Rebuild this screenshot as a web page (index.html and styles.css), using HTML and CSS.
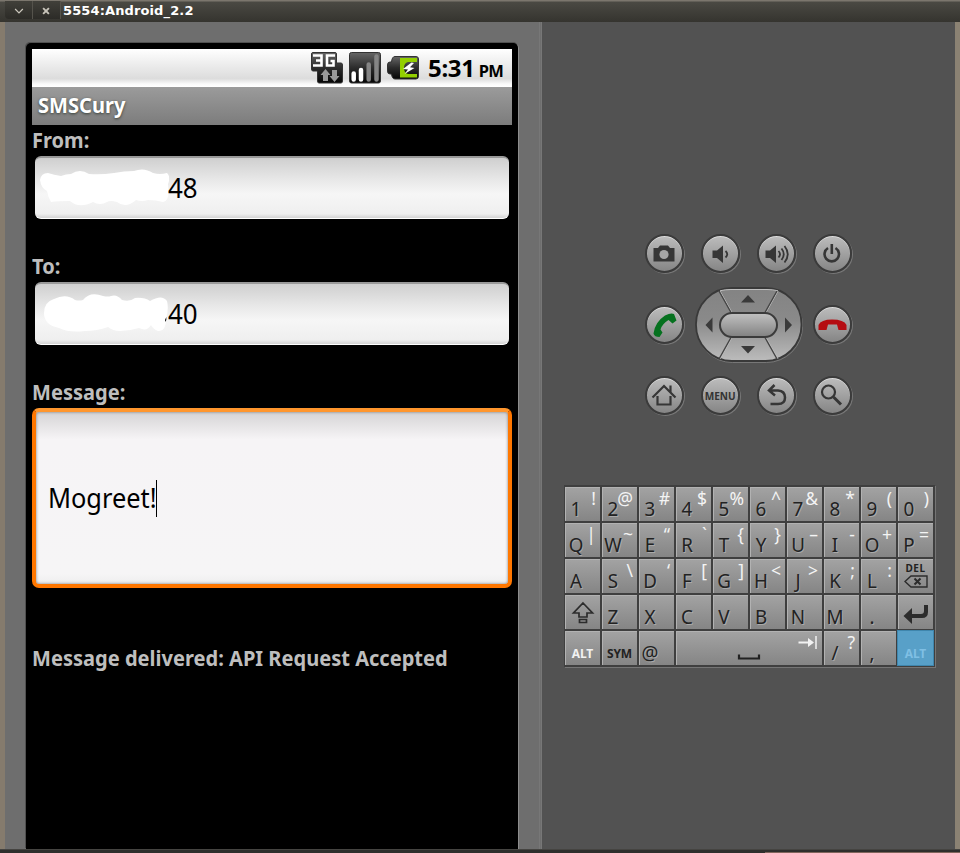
FILE: index.html
```html
<!DOCTYPE html>
<html lang="en">
<head>
<meta charset="utf-8">
<title>5554:Android_2.2</title>
<link rel="stylesheet" href="styles.css">
</head>
<body>
<div class="window">
  <header class="titlebar">
    <svg class="winbtn first" viewBox="0 0 28 18"><path d="M10.500 8 L14.500 12 L18.500 8" fill="none" stroke="#c8c4ba" stroke-width="1.300"/></svg>
    <svg class="winbtn" viewBox="0 0 28 18"><path d="M10.500 7 L16.500 13 M16.500 7 L10.500 13" fill="none" stroke="#c8c4ba" stroke-width="2"/></svg>
    <span class="title">5554:Android_2.2</span>
  </header>
  <div class="body">
    <section class="device">
      <div class="phone">
        <div class="statusbar">
          <svg class="st" width="110" height="36" viewBox="310 50 110 36">
            <defs>
              <linearGradient id="dk" x2="0" y2="1"><stop offset="0" stop-color="#666"/><stop offset=".5" stop-color="#2c2c2c"/><stop offset="1" stop-color="#050505"/></linearGradient>
            </defs>
            <path d="M313 52.500H335Q336.500 52.500 336.500 54V63H341Q342.500 63 342.500 65V81Q342.500 83 341 83H319Q317.500 83 317.500 81V71H313Q311.500 71 311.500 69V54Q311.500 52.500 313 52.500Z" fill="url(#dk)" stroke="#333"/>
            <path d="M313 55.500H321.500V65.500H313 M316 60.500H321.500 M335 55.500H327V65.500H333.500V61H330.500" fill="none" stroke="#fff" stroke-width="2.600"/>
            <path d="M325.500 69L330.500 75H328V81H323V75H320.500Z M334.500 82L339.500 76H337V70H332V76H329.500Z" fill="#999"/>
            <rect x="349.500" y="52.500" width="31" height="30.500" rx="2" fill="url(#dk)" stroke="#333"/>
            <g stroke-width="4.500" stroke-linecap="round"><path d="M353.700 73.500V79.500M361 70V79.500" stroke="#fff"/><path d="M368.700 64.500V79.500M376.500 56.500V79.500" stroke="#858585"/></g>
            <path d="M395 56.500H416Q418.500 56.500 418.500 59V76Q418.500 79 416 79H395Q392 79 391.500 74H390Q387.500 74 387.500 71V65Q387.500 62 390 62H391.500Q392 56.500 395 56.500Z" fill="url(#dk)" stroke="#333"/>
            <path d="M400 58H417V62H408Q404 63 404 68Q404 73 408 74H417V77.500H400Z" fill="#93cf00"/>
            <path d="M411.500 62.500L403 69L408 69.500L404.500 74L414.500 68L410 67.200L414 63Z" fill="#fff"/>
          </svg>
          <span class="clock">5:31 <small>PM</small></span>
        </div>
        <div class="appbar"><span>SMSCury</span></div>
        <div class="label from">From:</div>
        <div class="field">
          <svg class="blot" width="130" height="44" viewBox="39 166 130 44"><path d="M40 180Q41 173 48 173Q54 175 61 176Q66 174 71 174Q80 168 89 174Q101 175 114 173Q124 171 134 171Q144 167 153 173Q160 175 167 173Q171 177 168 184Q170 202 163 202Q156 200 148 200Q142 202 136 200Q126 209 117 202Q110 200 107 202Q100 206 93 202Q79 209 70 201Q58 201 51 202Q48 197 47 191Q41 188 40 180Z" fill="#fff"/></svg>
          <span class="digits">48</span>
        </div>
        <div class="label to">To:</div>
        <div class="field">
          <svg class="blot" width="130" height="44" viewBox="39 292 130 44"><path d="M44 313Q44 302 54 299Q66 293 75 300Q79 301 83 300Q90 291 103 296Q108 297 111 296Q117 294 122 300Q130 302 135 298Q144 297 150 301Q162 294 167 301Q169 309 166 319Q166 332 158 331Q153 329 151 325Q147 332 139 328Q129 331 120 331Q113 331 108 327Q97 331 85 331Q69 333 59 328Q44 325 44 313Z" fill="#fff"/><path d="M165 320L166.300 317V320L165 322Z" fill="#111"/></svg>
          <span class="digits">40</span>
        </div>
        <div class="label msg">Message:</div>
        <div class="field focused"><span class="mogreet">Mogreet!</span><i class="caret"></i></div>
        <div class="label result">Message delivered: API Request Accepted</div>
      </div>
    </section>
    <section class="controls">
      <div class="pad">
        <div class="btn"><svg viewBox="0 0 38 38"><path d="M8.500 13H13L15 10.500H23L25 13H29.500V26.500H8.500Z" fill="#363636"/><circle cx="19" cy="19.500" r="4.600" fill="#a5a5a5"/></svg></div>
        <div class="btn"><svg viewBox="0 0 38 38"><path d="M11.500 15.500H16L22 10.500V28L16 23H11.500Z" fill="#363636"/><path d="M24.500 16Q28 19.200 24.500 22.500" fill="none" stroke="#363636" stroke-width="1.800"/></svg></div>
        <div class="btn"><svg viewBox="0 0 38 38"><path d="M8.500 15.500H13L19 10.500V28L13 23H8.500Z" fill="#363636"/><path d="M21.500 16Q24.500 19.200 21.500 22.500M24.500 13.500Q29 19.200 24.500 25M27.500 11Q34 19.200 27.500 27.500" fill="none" stroke="#363636" stroke-width="1.800"/></svg></div>
        <div class="btn"><svg viewBox="0 0 38 38"><path d="M15 13A7.200 7.200 0 1 0 22.500 13M18.800 9V19" fill="none" stroke="#363636" stroke-width="2.600"/></svg></div>
        <div class="btn"><svg viewBox="0 0 38 38"><path d="M8.500 27.500Q10 16 20 9.500Q26 6.500 29 8L31.500 14.500L27.500 17.500L23.500 14Q17 18 15.500 23.500L17.500 26.500L14.500 31Q9.500 31 8.500 27.500Z" fill="#06711f"/></svg></div>
        <div class="dpad">
          <svg viewBox="0 0 108 76">
            <defs><linearGradient id="dp" x2="0" y2="1"><stop offset="0" stop-color="#838383"/><stop offset=".45" stop-color="#8a8a8a"/><stop offset="1" stop-color="#bcbcbc"/></linearGradient>
            <linearGradient id="ok" x2="0" y2="1"><stop offset="0" stop-color="#c2c2c2"/><stop offset="1" stop-color="#818181"/></linearGradient></defs>
            <rect x="1.500" y="2.500" width="106" height="73" rx="36" fill="none" stroke="#777"/>
            <rect x="1" y="1" width="105.500" height="73" rx="36" fill="url(#dp)" stroke="#393939" stroke-width="1.800"/>
            <path d="M25 3.800Q30 2.500 36 2.500H72Q78 2.500 83 3.800" fill="none" stroke="#c0c0c0"/>
            <path d="M25 4L37 25.500M83 4L71 25.500M25 72L37 50.500M83 72L71 50.500" stroke="#c0c0c0" stroke-width="1"/>
            <path d="M24 4L36 25.500M82 4L70 25.500M24 72L36 50.500M82 72L70 50.500" stroke="#444" stroke-width="1.400"/>
            <rect x="25" y="26" width="57" height="24" rx="12" fill="url(#ok)" stroke="#3b3b3b" stroke-width="2"/>
            <path d="M46 15.500L53 8L60 15.500ZM10.500 38L17.500 30.500V45.500ZM97 38L90 30.500V45.500ZM46 59H60L53 66.500Z" fill="#3a3a3a"/>
          </svg>
        </div>
        <div class="btn"><svg viewBox="0 0 38 38"><path d="M5.500 24V19Q8 13.500 19 13.500Q31 13.500 33.500 19V24H25.500L24 18.500H15L13.500 24Z" fill="#b50d12"/></svg></div>
        <div class="btn"><svg viewBox="0 0 38 38"><path d="M7.500 20.500L19 9L30.500 20.500M12.500 19V27.500H25.500V19M25.500 8.500V15" fill="none" stroke="#363636" stroke-width="2.200"/></svg></div>
        <div class="btn"><b>MENU</b></div>
        <div class="btn"><svg viewBox="0 0 38 38"><path d="M17.500 8L12 13.500L18 18.500M12 13.500H21Q28 14 28 20.500Q28 27 21 27H13.500" fill="none" stroke="#363636" stroke-width="2.500"/></svg></div>
        <div class="btn"><svg viewBox="0 0 38 38"><circle cx="15.500" cy="15" r="6.500" fill="none" stroke="#363636" stroke-width="2.200"/><path d="M20.500 20L28 27.500" stroke="#363636" stroke-width="3"/></svg></div>
      </div>
      <div class="keys">
        <div class="key"><b>1</b><i>!</i></div><div class="key"><b>2</b><i>@</i></div><div class="key"><b>3</b><i>#</i></div><div class="key"><b>4</b><i>$</i></div><div class="key"><b>5</b><i>%</i></div><div class="key"><b>6</b><i>^</i></div><div class="key"><b>7</b><i>&amp;</i></div><div class="key"><b>8</b><i>*</i></div><div class="key"><b>9</b><i>(</i></div><div class="key"><b>0</b><i>)</i></div>
        <div class="key"><b>Q</b><i>|</i></div><div class="key"><b>W</b><i>~</i></div><div class="key"><b>E</b><i>“</i></div><div class="key"><b>R</b><i>`</i></div><div class="key"><b>T</b><i>{</i></div><div class="key"><b>Y</b><i>}</i></div><div class="key"><b>U</b><i>–</i></div><div class="key"><b>I</b><i>-</i></div><div class="key"><b>O</b><i>+</i></div><div class="key"><b>P</b><i>=</i></div>
        <div class="key"><b>A</b></div><div class="key"><b>S</b><i>\</i></div><div class="key"><b>D</b><i>‘</i></div><div class="key"><b>F</b><i>[</i></div><div class="key"><b>G</b><i>]</i></div><div class="key"><b>H</b><i>&lt;</i></div><div class="key"><b>J</b><i>&gt;</i></div><div class="key"><b>K</b><i>;</i></div><div class="key"><b>L</b><i>:</i></div>
        <div class="key del"><span>DEL</span><svg width="24" height="13" viewBox="0 0 24 13"><path d="M1 6.500L7 1H23V12H7Z" fill="none" stroke="#2c2c2c" stroke-width="1.400"/><path d="M10.500 3.500L16.500 9.500M16.500 3.500L10.500 9.500" stroke="#2c2c2c" stroke-width="2"/></svg></div>
        <div class="key"><svg viewBox="0 0 35 34"><path d="M18 8L27.500 18H22V22H14V18H8.500ZM14.500 24.500H21.500V27.500H14.500Z" fill="none" stroke="#2c2c2c" stroke-width="1.700"/></svg></div>
        <div class="key"><b>Z</b></div><div class="key"><b>X</b></div><div class="key"><b>C</b></div><div class="key"><b>V</b></div><div class="key"><b>B</b></div><div class="key"><b>N</b></div><div class="key"><b>M</b></div><div class="key"><b>.</b></div>
        <div class="key"><svg viewBox="0 0 35 34"><path d="M5.500 21L14 13V19H23Q26 19 26 16V10H30V17Q30 23 24 23H14V29Z" fill="#2c2c2c"/></svg></div>
        <div class="key word light"><span>ALT</span></div><div class="key word"><span>SYM</span></div><div class="key"><b>@</b></div>
        <div class="key space"><svg viewBox="0 0 146 34"><path d="M63 23.500V27.500H83V23.500" fill="none" stroke="#222" stroke-width="2.200"/><path d="M122.500 11.500H136" stroke="#f2f2f2" stroke-width="2"/><path d="M132 7L138 11.500L132 16Z" fill="#f2f2f2"/><path d="M140 5V18" stroke="#f2f2f2" stroke-width="1.500"/></svg></div>
        <div class="key"><b>/</b><i>?</i></div><div class="key"><b>,</b></div><div class="key word blue"><span>ALT</span></div>
      </div>
    </section>
  </div>
  <footer class="bottom"><span></span></footer>
</div>
</body>
</html>
```
FILE: styles.css
```css
* { box-sizing: border-box; }
body { margin: 0; font-family: "Noto Sans", "Open Sans", sans-serif; }
svg { display: block; }
.window { width: 960px; height: 853px; overflow: hidden; display: flex; flex-direction: column; background: #3b3a36; }
.titlebar { height: 22px; display: flex; align-items: flex-start; padding: 1px 0 0 5px; background: linear-gradient(#7b766d 0, #7b766d 1px, #4a4943 2px, #35342f); }
.winbtn { width: 28px; height: 18px; border-right: 1px solid #55534c; background: linear-gradient(#41403a, #2c2b27); }
.winbtn.first { border-radius: 0 0 0 4px; }
.title { margin-left: 2px; color: #fff; font: bold 13px/20px "DejaVu Sans", sans-serif; letter-spacing: .12px; }
.body { height: 827px; display: flex; border-left: 5px solid #857b6d; border-right: 5px solid #8b8273; background: #525252; }
.device { width: 537px; border-right: 3px double #777; background: #6e6e6e; padding: 21px 0 0 20px; border-left: 1px solid #6e6e6e; }
.phone { width: 493px; height: 806px; padding: 6px; background: #000; border-right: 1px solid #8d8d8d; border-radius: 5px 5px 0 0; box-shadow: -1px -1px 0 #505050; }
.statusbar { width: 480px; height: 38px; display: flex; align-items: flex-start; padding: 1px 9px 0 278px; background: linear-gradient(#fff 0, #f6f6f6 20%, #dcdcdc 78%, #fafafa 92%, #fff); }
.st { flex: none; }
.clock { margin-left: 8px; white-space: nowrap; color: #000; font-weight: 700; font-size: 24px; line-height: 36px; letter-spacing: -.3px; }
.clock small { font-size: 16.500px; font-weight: 700; letter-spacing: -.7px; margin-left: -2px; }
.appbar { width: 480px; height: 38px; padding-left: 6px; background: linear-gradient(#9b9b9b, #7c7c7c); color: #fff; font-weight: 700; font-size: 21px; line-height: 36px; text-shadow: 0 1px 3px #343b34; }
.appbar span { display: inline-block; transform: scaleX(.955); transform-origin: left; }
.label { height: 31px; color: #bebebe; font-weight: 700; font-size: 21px; line-height: 31px; white-space: nowrap; transform: scaleX(.955); transform-origin: left; }
.field { width: 474px; height: 63px; margin: 0 0 32px 3px; display: flex; align-items: center; padding: 0 4px; border-radius: 6px; border-top: 2px solid #999; border-bottom: 1px solid #fff; background: linear-gradient(#cfcfcf, #e7e7e7 35%, #f6f6f6 60%, #efefef 93%, #d4d4d4); color: #000; font-size: 27px; }
.blot { flex: none; }
.digits { margin: -2px 0 0 -1px; transform: scaleX(.96); transform-origin: left; }
.focused { width: 480px; height: 180px; margin: 0 0 55px; padding: 0 13px 0 12px; border: 4px solid #ff7700; border-top-color: #ff962d; border-radius: 7px; background: linear-gradient(#d5d4d5, #f6f4f6 16%, #f6f5f6 94%, #eee); box-shadow: inset 0 0 3px #777; }
.caret { width: 1px; height: 37px; background: #000; }
.mogreet { margin-top: -2px; width: 108px; white-space: nowrap; transform: scaleX(.94); transform-origin: left; }
.controls { width: 413px; padding: 196px 0 0 21px; }
.pad { display: grid; grid-template-columns: repeat(4, 56px); grid-template-rows: repeat(3, 71px); place-items: center; margin-left: 73px; }
.btn { width: 39px; height: 39px; border-radius: 50%; border: 2px solid #3b3b3b; background: linear-gradient(#bcbcbc, #a4a4a4 45%, #858585); box-shadow: 1px 1px 0 #777, inset 0 1px 0 #ddd; display: grid; place-items: center; }
.btn svg { width: 38px; height: 38px; margin: -2px; }
.btn b { font-size: 10.500px; line-height: 14px; color: #333; transform: scaleX(.96); margin-left: 1px; }
.dpad { grid-column: span 2; width: 108px; height: 76px; margin-left: 2px; }
.keys { margin: 54px 0 0 1px; width: 371px; height: 182px; padding: 2px 1px 1px; display: grid; grid-template-columns: repeat(10, 35px); grid-auto-rows: 34px; gap: 2px; background: #3f3f3f; box-shadow: 1px 1px 0 #757575; }
.key { display: flex; background: linear-gradient(#a3a3a3, #858585); box-shadow: inset 1px 1px 0 #b2b2b2; color: #222; }
.key b { width: 22px; flex: none; display: flex; justify-content: center; margin-top: 8px; font-weight: 400; font-size: 20px; line-height: 27px; height: 27px; text-shadow: 1px 1px 0 #aaa; transform: scaleX(.94); }
.key i { flex: 1; display: flex; justify-content: flex-end; margin: -1px 4px 0 -10px; font-style: normal; font-size: 17.500px; line-height: 25px; height: 25px; color: #f4f4f4; }
.space { grid-column: span 4; }
.word { justify-content: center; font-weight: 700; font-size: 12px; line-height: 20px; padding-top: 13px; letter-spacing: -.1px; }
.light { color: #f2f2f2; }
.blue { background: #58a0c8; color: #7fbfe4; box-shadow: 0 0 0 1px #3f86ad; }
.del { flex-direction: column; align-items: center; font-weight: 700; font-size: 10px; line-height: 14px; letter-spacing: .5px; padding-top: 2px; }
.bottom { height: 4px; background: linear-gradient(#454441 1px, #2f2e2c 1px, #2f2e2c); display: flex; align-items: flex-end; justify-content: flex-end; }
.bottom span { width: 195px; height: 1px; background: #80655c; }
```
